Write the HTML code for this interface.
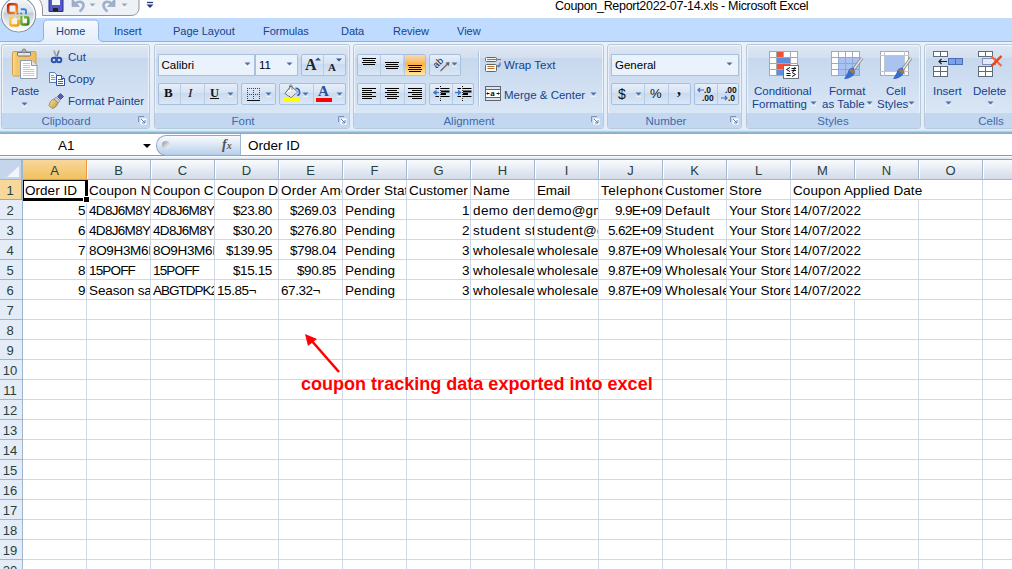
<!DOCTYPE html><html><head><meta charset="utf-8"><style>
*{box-sizing:border-box}
body{margin:0;width:1012px;height:569px;overflow:hidden;position:relative;background:#fff;font-family:"Liberation Sans",sans-serif}
.a{position:absolute}
.tab{position:absolute;top:24px;font-size:11px;color:#15428B;line-height:14px;white-space:nowrap}
.grp{position:absolute;top:44px;height:85px;border:1px solid #B7C8DB;border-radius:3px;
 background:linear-gradient(#E8EEF6 0px,#DDE6F2 2px,#D3DFEF 13px,#C7D8EE 13.5px,#D9E6F5 68px);overflow:hidden;
 box-shadow:inset 0 0 0 1px rgba(255,255,255,.55)}
.glab{position:absolute;left:0;right:0;bottom:0;height:15px;background:#C3D8F0;color:#3E6AAA;font-size:11.5px;text-align:center;line-height:16.5px}
.rt{position:absolute;font-size:11px;color:#15428B;white-space:nowrap;line-height:13px}
.btn{position:absolute;border:1px solid #A7C0DE;border-radius:2px;background:linear-gradient(#E6EEF9,#D7E4F4 42%,#C9DBF0 46%,#DAE7F6)}
.combo{position:absolute;border:1px solid #A9C1DE;background:#EAF2FB;font-size:11.5px;color:#000;line-height:21px;padding-left:5px;white-space:nowrap}
.dd{position:absolute;width:0;height:0;border-left:3px solid transparent;border-right:3px solid transparent;border-top:3px solid #4E72A8}
.cell{position:absolute;height:20px;line-height:22px;font-size:13.5px;color:#000;white-space:nowrap;overflow:hidden;padding:0 1px 0 2px}
.r{text-align:right}
.ch{position:absolute;top:160px;height:19px;font-size:13px;color:#27413E;text-align:center;line-height:21px}
.rh{position:absolute;left:-1px;width:22px;height:19px;font-size:13px;color:#27413E;text-align:center;line-height:21.5px}
</style></head><body><div class="a" style="left:0;top:0;width:1012px;height:18px;background:#fff"></div>
<div class="a" style="left:555px;top:-3.3px;font-size:12.5px;letter-spacing:-0.3px;color:#000;white-space:nowrap;line-height:18px">Coupon_Report2022-07-14.xls - Microsoft Excel</div>
<svg class="a" style="left:30px;top:0" width="115" height="18" viewBox="0 0 115 18"><path d="M9 -1 C11 2, 12.5 5, 12.5 9 V15.5 H101 C106 15.5, 109 12, 109 8 V-1 Z" fill="#EEF2F7" stroke="#8F949B" stroke-width="1"/></svg>
<div class="a" style="left:0;top:18px;width:1012px;height:23px;background:#BFDBFF"></div>
<div class="a" style="left:0;top:41px;width:1012px;height:1px;background:#8DB2E3"></div>
<div class="a" style="left:0;top:42px;width:1012px;height:88px;background:linear-gradient(#EAF1FA,#E3ECF7)"></div>
<div class="a" style="left:0;top:130px;width:1012px;height:1px;background:#C9EEF9"></div>
<div class="a" style="left:0;top:131px;width:1012px;height:1px;background:#B9CCE2"></div><div class="a" style="left:0;top:132px;width:1012px;height:2px;background:linear-gradient(#9DB5D4,#8AA6CB)"></div>
<svg class="a" style="left:38px;top:18px" width="66" height="26" viewBox="0 0 66 26"><defs><linearGradient id="tg" x1="0" y1="0" x2="0" y2="1"><stop offset="0" stop-color="#F7FAFE"/><stop offset="1" stop-color="#E3ECF8"/></linearGradient></defs><path d="M0 23.5 C4 23.5, 5.5 22, 5.5 19 V6 C5.5 3.5, 7 2, 9.5 2 H56.5 C59 2, 60.5 3.5, 60.5 6 V19 C60.5 22, 62 23.5, 66 23.5 V26 H0 Z" fill="url(#tg)" stroke="#8DB2E3" stroke-width="1"/><path d="M0 24.5H66V26H0z" fill="#E9F0FA"/></svg>
<div class="tab" style="left:56px">Home</div>
<div class="tab" style="left:114px">Insert</div>
<div class="tab" style="left:173px">Page Layout</div>
<div class="tab" style="left:263px">Formulas</div>
<div class="tab" style="left:341px">Data</div>
<div class="tab" style="left:393px">Review</div>
<div class="tab" style="left:457px">View</div>
<div class="grp" style="left:1px;width:149px"><div class="glab" style="text-indent:-19px">Clipboard</div></div>
<div class="grp" style="left:154px;width:196px"><div class="glab" style="text-indent:-18px">Font</div></div>
<div class="grp" style="left:353px;width:251px"><div class="glab" style="text-indent:-19px">Alignment</div></div>
<div class="grp" style="left:607px;width:135px"><div class="glab" style="text-indent:-17px">Number</div></div>
<div class="grp" style="left:746px;width:175px"><div class="glab" style="text-indent:-1px">Styles</div></div>
<div class="grp" style="left:924px;width:92px"><div class="glab" style="text-indent:42px">Cells</div></div>
<svg class="a" style="left:11px;top:48px" width="28" height="32" viewBox="0 0 28 32"><defs><linearGradient id="cb" x1="0" y1="0" x2="1" y2="0"><stop offset="0" stop-color="#FBDD98"/><stop offset=".15" stop-color="#F4C76C"/><stop offset="1" stop-color="#EFBE5E"/></linearGradient></defs><rect x="1.5" y="3.5" width="23.5" height="24.5" rx="1.5" fill="url(#cb)" stroke="#CFA04E"/><path d="M6.5 4.5h13v2.5c0 .8-.5 1-1 1h-11c-.5 0-1-.2-1-1z" fill="#E6E9ED" stroke="#6F757D"/><circle cx="13" cy="3" r="2" fill="#DADDE2" stroke="#6F757D" stroke-width=".9"/><circle cx="13" cy="3" r=".8" fill="#7A5A2A"/><path d="M9.5 12.5h11.5l5 5v13h-16.5z" fill="#fff" stroke="#8E9AAB"/><path d="M20.5 12.5v5h5.5" fill="#E2E7EE" stroke="#8E9AAB"/><path d="M12 15.5h7M12 17.5h7M12 19.5h7M12 21.5h11.5M12 23.5h11.5M12 25.5h11.5M12 27.5h11.5" stroke="#C3C9D1"/></svg>
<div class="rt" style="left:11px;top:85px;font-size:11px">Paste</div>
<svg class="a" style="left:21px;top:102px" width="7" height="5" viewBox="0 0 7 5"><path d="M0.5 0.5h6l-3 3z" fill="#4C6FA8"/><path d="M1 4.5h5" stroke="#fff" stroke-opacity=".6"/></svg>
<svg class="a" style="left:49px;top:49px" width="14" height="15" viewBox="0 0 14 15"><path d="M5 1.5l2.5 7M10 1.5l-2.5 7" stroke="#7A8089" stroke-width="1.6"/><path d="M5.2 1.5l2.3 6.5" stroke="#D8DCE2" stroke-width=".6"/><circle cx="5" cy="11" r="2.3" fill="none" stroke="#2A50B0" stroke-width="1.9"/><circle cx="10" cy="11" r="2.3" fill="none" stroke="#2A50B0" stroke-width="1.9"/></svg>
<div class="rt" style="left:68px;top:51px;font-size:11.5px">Cut</div>
<svg class="a" style="left:48px;top:71px" width="18" height="15" viewBox="0 0 18 15"><path d="M1.5 1.5h5l2.5 2.5v7.5h-7.5z" fill="#F4F7FC" stroke="#5A7BB8"/><path d="M3 4.5h3M3 6.5h4.5M3 8.5h4.5" stroke="#7C9BD0"/><path d="M8.5 4.5h5l3 3v7h-8z" fill="#fff" stroke="#2B4FA6"/><path d="M10 8.5h5M10 10.5h5M10 12.5h5" stroke="#3A66C4"/><path d="M13.5 4.5v3h3" fill="#DDE6F3" stroke="#2B4FA6"/></svg>
<div class="rt" style="left:68px;top:73px;font-size:11.5px">Copy</div>
<svg class="a" style="left:48px;top:92px" width="18" height="17" viewBox="0 0 18 17"><defs><linearGradient id="br" x1="0" y1="0" x2="1" y2="1"><stop offset="0" stop-color="#F6E7A4"/><stop offset="1" stop-color="#B8953E"/></linearGradient></defs><path d="M12.5 1.5l3 3-3 3-3-3z" fill="#5E5AB8" stroke="#3C3A8A" stroke-width=".8"/><path d="M8 5l4 4-2 2-4-4z" fill="#C9CCD2" stroke="#7D8088" stroke-width=".7"/><path d="M6 7l4 4c-1 3-3 5-6 5.5L1 13.5C1.5 10.5 3 8 6 7z" fill="url(#br)" stroke="#9C7E36" stroke-width=".8"/></svg>
<div class="rt" style="left:68px;top:95px;font-size:11.5px">Format Painter</div>
<svg class="a" style="left:138px;top:116px" width="9" height="9" viewBox="0 0 9 9"><path d="M0.5 6V0.5H6" fill="none" stroke="#7A94B8"/><rect x="2.5" y="2.5" width="6" height="6" fill="#fff" stroke="none"/><path d="M3 3l4 4M7 4v3H4" stroke="#5F7DA8" fill="none"/></svg>
<svg class="a" style="left:338px;top:116px" width="9" height="9" viewBox="0 0 9 9"><path d="M0.5 6V0.5H6" fill="none" stroke="#7A94B8"/><rect x="2.5" y="2.5" width="6" height="6" fill="#fff" stroke="none"/><path d="M3 3l4 4M7 4v3H4" stroke="#5F7DA8" fill="none"/></svg>
<svg class="a" style="left:591px;top:116px" width="9" height="9" viewBox="0 0 9 9"><path d="M0.5 6V0.5H6" fill="none" stroke="#7A94B8"/><rect x="2.5" y="2.5" width="6" height="6" fill="#fff" stroke="none"/><path d="M3 3l4 4M7 4v3H4" stroke="#5F7DA8" fill="none"/></svg>
<svg class="a" style="left:730px;top:116px" width="9" height="9" viewBox="0 0 9 9"><path d="M0.5 6V0.5H6" fill="none" stroke="#7A94B8"/><rect x="2.5" y="2.5" width="6" height="6" fill="#fff" stroke="none"/><path d="M3 3l4 4M7 4v3H4" stroke="#5F7DA8" fill="none"/></svg>
<div class="combo" style="left:158px;top:54px;width:97px;height:22px;padding-left:2.5px">Calibri</div>
<svg class="a" style="left:244px;top:62px" width="7" height="5" viewBox="0 0 7 5"><path d="M0.5 0.5h6l-3 3z" fill="#4C6FA8"/><path d="M1 4.5h5" stroke="#fff" stroke-opacity=".6"/></svg>
<div class="combo" style="left:255px;top:54px;width:43px;height:22px;padding-left:3px">11</div>
<svg class="a" style="left:286px;top:62px" width="7" height="5" viewBox="0 0 7 5"><path d="M0.5 0.5h6l-3 3z" fill="#4C6FA8"/><path d="M1 4.5h5" stroke="#fff" stroke-opacity=".6"/></svg>
<div class="btn" style="left:301px;top:54px;width:45px;height:22px"></div>
<div class="a" style="left:323px;top:55px;width:1px;height:20px;background:#B7CBE3"></div>
<div class="a" style="left:305px;top:55px;font-family:'Liberation Serif';font-weight:bold;font-size:16px;line-height:20px;color:#222">A</div>
<svg class="a" style="left:315px;top:57px" width="7" height="4" viewBox="0 0 7 4"><path d="M0 3.5h6l-3-3z" fill="#2E5596"/></svg>
<div class="a" style="left:328px;top:60px;font-family:'Liberation Serif';font-weight:bold;font-size:11px;line-height:14px;color:#222">A</div>
<svg class="a" style="left:336px;top:58px" width="7" height="4" viewBox="0 0 7 4"><path d="M0 0.5h6l-3 3z" fill="#2E5596"/></svg>
<div class="btn" style="left:158px;top:83px;width:80px;height:22px"></div>
<div class="a" style="left:180px;top:84px;width:1px;height:20px;background:#B7CBE3"></div>
<div class="a" style="left:204px;top:84px;width:1px;height:20px;background:#B7CBE3"></div>
<div class="a" style="left:164px;top:85px;font-family:'Liberation Serif';font-weight:bold;font-size:13px;line-height:16px;color:#111">B</div>
<div class="a" style="left:188px;top:85px;font-family:'Liberation Serif';font-style:italic;font-size:13.5px;line-height:16px;color:#111">I</div>
<div class="a" style="left:210px;top:85px;font-family:'Liberation Serif';font-weight:bold;font-size:12.5px;line-height:16px;color:#111;text-decoration:underline">U</div>
<svg class="a" style="left:227px;top:92px" width="7" height="5" viewBox="0 0 7 5"><path d="M0.5 0.5h6l-3 3z" fill="#4C6FA8"/><path d="M1 4.5h5" stroke="#fff" stroke-opacity=".6"/></svg>
<div class="btn" style="left:241px;top:83px;width:35px;height:22px"></div>
<svg class="a" style="left:246px;top:87px" width="15" height="15" viewBox="0 0 15 15"><path d="M1 1.5h13M1 7.5h13M1.5 1v12M7.5 1v12M13.5 1v12" stroke="#444" stroke-dasharray="1 1" fill="none"/><path d="M1 13.5h13" stroke="#111"/></svg>
<svg class="a" style="left:265px;top:92px" width="7" height="5" viewBox="0 0 7 5"><path d="M0.5 0.5h6l-3 3z" fill="#4C6FA8"/><path d="M1 4.5h5" stroke="#fff" stroke-opacity=".6"/></svg>
<div class="btn" style="left:279px;top:83px;width:67px;height:22px"></div>
<div class="a" style="left:313px;top:84px;width:1px;height:20px;background:#B7CBE3"></div>
<svg class="a" style="left:283px;top:84px" width="18" height="14" viewBox="0 0 18 14"><path d="M8 2L2 9.5L8 13.5L14.5 8z" fill="#fff" stroke="#5A5F66" stroke-width="1"/><path d="M2.5 9.5L8 13L14 8.2L10 6z" fill="#E2E6EC"/><path d="M6.5 5.5V1.8C6.5 .5 9 .5 9 1.8V6" fill="none" stroke="#7D828A" stroke-width="1"/><path d="M12.5 4.5C15.5 4 17 6.5 16.5 9.5C16.3 11 15 11.5 14.5 10.5" fill="none" stroke="#2F62C8" stroke-width="1.8"/></svg>
<div class="a" style="left:283px;top:98px;width:16px;height:4px;background:#FFFF00"></div>
<svg class="a" style="left:302px;top:92px" width="7" height="5" viewBox="0 0 7 5"><path d="M0.5 0.5h6l-3 3z" fill="#4C6FA8"/><path d="M1 4.5h5" stroke="#fff" stroke-opacity=".6"/></svg>
<div class="a" style="left:318px;top:84px;font-family:'Liberation Serif';font-weight:bold;font-size:15px;line-height:15px;color:#2B4F9E">A</div>
<div class="a" style="left:316px;top:98px;width:16px;height:4px;background:#FF0000"></div>
<svg class="a" style="left:336px;top:92px" width="7" height="5" viewBox="0 0 7 5"><path d="M0.5 0.5h6l-3 3z" fill="#4C6FA8"/><path d="M1 4.5h5" stroke="#fff" stroke-opacity=".6"/></svg>
<div class="btn" style="left:357px;top:54px;width:69px;height:22px;overflow:hidden"><div class="a" style="left:45px;top:0;width:23px;height:20px;background:linear-gradient(#F7D9B2,#FDBB68 35%,#FFAE45 45%,#FFD27C 80%,#FFE9A3)"></div></div>
<div class="a" style="left:380px;top:55px;width:1px;height:20px;background:#B7CBE3"></div>
<div class="a" style="left:404px;top:55px;width:1px;height:20px;background:#B7CBE3"></div>
<svg class="a" style="left:361px;top:57px" width="16" height="9" viewBox="0 0 16 9"><path d="M1 1.5h14M2 3.5h12M1 5.5h14M2 7.5h12" stroke="#000" stroke-width="1.1"/></svg>
<svg class="a" style="left:384px;top:61px" width="16" height="9" viewBox="0 0 16 9"><path d="M1 1.5h14M2 3.5h12M1 5.5h14M2 7.5h12" stroke="#000" stroke-width="1.1"/></svg>
<svg class="a" style="left:407px;top:64px" width="16" height="9" viewBox="0 0 16 9"><path d="M1 1.5h14M2 3.5h12M1 5.5h14M2 7.5h12" stroke="#000" stroke-width="1.1"/></svg>
<div class="btn" style="left:429px;top:54px;width:32px;height:22px"></div>
<svg class="a" style="left:433px;top:56px" width="18" height="17" viewBox="0 0 18 17"><text x="0" y="10" font-family="Liberation Sans" font-size="9.5" transform="rotate(-45 5 7)" fill="#222">ab</text><path d="M7.5 15l8-8" stroke="#6E5A4E" stroke-width="1.1"/><path d="M16.5 6l-4 .8 3.2 3.2z" fill="#6E5A4E"/></svg>
<svg class="a" style="left:451px;top:62px" width="7" height="5" viewBox="0 0 7 5"><path d="M0.5 0.5h6l-3 3z" fill="#4C6FA8"/><path d="M1 4.5h5" stroke="#fff" stroke-opacity=".6"/></svg>
<div class="btn" style="left:357px;top:83px;width:69px;height:22px"></div>
<div class="a" style="left:380px;top:84px;width:1px;height:20px;background:#B7CBE3"></div>
<div class="a" style="left:404px;top:84px;width:1px;height:20px;background:#B7CBE3"></div>
<svg class="a" style="left:361px;top:87px" width="16" height="14" viewBox="0 0 16 14"><path d="M1 1.5h14M1 3.5h10M1 5.5h14M1 7.5h10M1 9.5h14M1 11.5h10" stroke="#000" stroke-width="1.1"/></svg>
<svg class="a" style="left:384px;top:87px" width="16" height="14" viewBox="0 0 16 14"><path d="M1 1.5h14M3 3.5h10M1 5.5h14M3 7.5h10M1 9.5h14M3 11.5h10" stroke="#000" stroke-width="1.1"/></svg>
<svg class="a" style="left:407px;top:87px" width="16" height="14" viewBox="0 0 16 14"><path d="M1 1.5h14M5 3.5h10M1 5.5h14M5 7.5h10M1 9.5h14M5 11.5h10" stroke="#000" stroke-width="1.1"/></svg>
<div class="btn" style="left:429px;top:83px;width:45px;height:22px"></div>
<div class="a" style="left:452px;top:84px;width:1px;height:20px;background:#B7CBE3"></div>
<svg class="a" style="left:433px;top:86px" width="17" height="16" viewBox="0 0 17 16"><path d="M7.5 0v1M7.5 14v1" stroke="#000"/><path d="M7.5 2v11" stroke="#000" stroke-dasharray="1 1" stroke-opacity=".7"/><path d="M2.5 2.5h3.5M8 2.5h8.5M2.5 10.5h3.5M8 10.5h8.5" stroke="#000"/><path d="M8 5.5h8.5M8 8h5" stroke="#000" stroke-width="1.8"/><path d="M0.5 6.5h5.5" stroke="#3B73D6" stroke-width="1.3"/><path d="M0 6.5l3.5-3v6z" fill="#3B73D6"/></svg>
<svg class="a" style="left:455px;top:86px" width="17" height="16" viewBox="0 0 17 16"><path d="M7.5 0v1M7.5 14v1" stroke="#000"/><path d="M7.5 2v11" stroke="#000" stroke-dasharray="1 1" stroke-opacity=".7"/><path d="M2.5 2.5h3.5M8 2.5h8.5M2.5 10.5h3.5M8 10.5h8.5" stroke="#000"/><path d="M8 5.5h8.5M8 8h5" stroke="#000" stroke-width="1.8"/><path d="M0 6.5h5" stroke="#3B73D6" stroke-width="1.3"/><path d="M6.5 6.5l-3.5-3v6z" fill="#3B73D6"/></svg>
<div class="a" style="left:478px;top:51px;width:1px;height:55px;background:#AFC5E0"></div>
<div class="a" style="left:479px;top:51px;width:1px;height:55px;background:#F0F6FC"></div>
<svg class="a" style="left:484px;top:56px" width="18" height="17" viewBox="0 0 18 17"><rect x="1.5" y="1.5" width="11" height="4" rx="1" fill="#fff" stroke="#5F6670"/><rect x="1.5" y="8.5" width="11" height="7" rx="1" fill="#fff" stroke="#5F6670"/><path d="M3 3.5h14" stroke="#B8732A" stroke-width="1.2"/><path d="M3.5 10.5h7M3.5 12.5h7" stroke="#B8732A" stroke-width="1.2"/><path d="M16 6.5v3.5h-2.5M13.5 10l1.5-1.5M13.5 10l1.5 1.5" stroke="#3A62B8" stroke-width="1" fill="none"/></svg>
<div class="rt" style="left:504px;top:59px;font-size:11.5px">Wrap Text</div>
<svg class="a" style="left:484px;top:86px" width="18" height="16" viewBox="0 0 18 16"><rect x="1.5" y="0.5" width="15" height="14" fill="#fff" stroke="#5F6670"/><path d="M1 3.5h16M1 11.5h16M9 0v3.5M9 11.5v3" stroke="#5F6670"/><rect x="2" y="1" width="14" height="2" fill="#DCE6F2"/><rect x="2" y="12" width="14" height="2" fill="#DCE6F2"/><text x="6.2" y="10.3" font-family="Liberation Serif" font-weight="bold" font-size="9" fill="#111">a</text><path d="M2.5 7.5h3M12.5 7.5h3" stroke="#111"/><path d="M2.5 7.5l1.5-1.5v3z" fill="#111"/><path d="M15.5 7.5l-1.5-1.5v3z" fill="#111"/></svg>
<div class="rt" style="left:504px;top:89px;font-size:11.5px">Merge &amp; Center</div>
<svg class="a" style="left:590px;top:92px" width="7" height="5" viewBox="0 0 7 5"><path d="M0.5 0.5h6l-3 3z" fill="#4C6FA8"/><path d="M1 4.5h5" stroke="#fff" stroke-opacity=".6"/></svg>
<div class="combo" style="left:611px;top:54px;width:128px;height:22px;padding-left:3px">General</div>
<svg class="a" style="left:726px;top:62px" width="7" height="5" viewBox="0 0 7 5"><path d="M0.5 0.5h6l-3 3z" fill="#4C6FA8"/><path d="M1 4.5h5" stroke="#fff" stroke-opacity=".6"/></svg>
<div class="btn" style="left:611px;top:83px;width:80px;height:22px"></div>
<div class="a" style="left:644px;top:84px;width:1px;height:20px;background:#B7CBE3"></div>
<div class="a" style="left:668px;top:84px;width:1px;height:20px;background:#B7CBE3"></div>
<div class="a" style="left:618px;top:85px;font-size:14px;line-height:18px;color:#111">$</div>
<svg class="a" style="left:635px;top:92px" width="7" height="5" viewBox="0 0 7 5"><path d="M0.5 0.5h6l-3 3z" fill="#4C6FA8"/><path d="M1 4.5h5" stroke="#fff" stroke-opacity=".6"/></svg>
<div class="a" style="left:650px;top:86px;font-size:13px;line-height:16px;color:#111">%</div>
<div class="a" style="left:677px;top:82px;font-family:'Liberation Serif';font-weight:bold;font-size:16px;line-height:16px;color:#111">,</div>
<div class="btn" style="left:694px;top:83px;width:45px;height:22px"></div>
<div class="a" style="left:717px;top:84px;width:1px;height:20px;background:#B7CBE3"></div>
<svg class="a" style="left:697px;top:86px" width="18" height="16" viewBox="0 0 18 16"><text x="7" y="7" font-family="Liberation Sans" font-size="8.5" font-weight="bold" fill="#111">.0</text><text x="5" y="14.5" font-family="Liberation Sans" font-size="8.5" font-weight="bold" fill="#111">.00</text><path d="M1 4h6M3 2l-2 2 2 2" stroke="#3D6CC0" stroke-width="1.2" fill="none"/></svg>
<svg class="a" style="left:720px;top:86px" width="18" height="16" viewBox="0 0 18 16"><text x="5" y="7" font-family="Liberation Sans" font-size="8.5" font-weight="bold" fill="#111">.00</text><text x="8" y="14.5" font-family="Liberation Sans" font-size="8.5" font-weight="bold" fill="#111">.0</text><path d="M1 12h6M5 10l2 2-2 2" stroke="#3D6CC0" stroke-width="1.2" fill="none"/></svg>
<svg class="a" style="left:768px;top:50px" width="32" height="30" viewBox="0 0 32 30"><g stroke="#A3A9B2" fill="#fff"><rect x="1.5" y="1.5" width="7" height="6"/><rect x="8.5" y="1.5" width="7" height="6" fill="#F0513A"/><rect x="15.5" y="1.5" width="7" height="6"/><rect x="22.5" y="1.5" width="7" height="6"/><rect x="1.5" y="7.5" width="7" height="6"/><rect x="8.5" y="7.5" width="14" height="6" fill="#5C8EE0"/><rect x="22.5" y="7.5" width="7" height="6"/><rect x="1.5" y="13.5" width="7" height="6"/><rect x="8.5" y="13.5" width="14" height="6" fill="#F0513A"/><rect x="22.5" y="13.5" width="7" height="6"/><rect x="1.5" y="19.5" width="7" height="6"/><rect x="8.5" y="19.5" width="7" height="6" fill="#5C8EE0"/></g><rect x="15.5" y="15.5" width="15" height="13" fill="#fff" stroke="#6F757D"/><path d="M22 17.5l-3.5 2 3.5 2M23.5 18.5h4.5M23.5 20.5h4.5M27 17l-2 5M18.5 23.5h4M18.5 25.5h4M24 22.5l3.5 2-3.5 2" stroke="#111" stroke-width="1" fill="none"/></svg>
<div class="rt" style="left:754px;top:85px;font-size:11.5px">Conditional</div>
<div class="rt" style="left:752px;top:98px;font-size:11.5px">Formatting</div>
<svg class="a" style="left:810px;top:101px" width="7" height="5" viewBox="0 0 7 5"><path d="M0.5 0.5h6l-3 3z" fill="#4C6FA8"/><path d="M1 4.5h5" stroke="#fff" stroke-opacity=".6"/></svg>
<svg class="a" style="left:830px;top:50px" width="34" height="30" viewBox="0 0 34 30"><g stroke="#A3A9B2" fill="#fff"><rect x="1.5" y="1.5" width="7" height="6"/><rect x="8.5" y="1.5" width="7" height="6"/><rect x="15.5" y="1.5" width="7" height="6"/><rect x="22.5" y="1.5" width="7" height="6"/><rect x="1.5" y="7.5" width="7" height="6"/><rect x="1.5" y="13.5" width="7" height="6"/><rect x="1.5" y="19.5" width="7" height="6"/></g><g stroke="#8FA8D6" fill="#A9C2F0"><rect x="8.5" y="7.5" width="7" height="6"/><rect x="15.5" y="7.5" width="7" height="6"/><rect x="22.5" y="7.5" width="7" height="6"/><rect x="8.5" y="13.5" width="7" height="6"/><rect x="15.5" y="13.5" width="7" height="6"/><rect x="22.5" y="13.5" width="7" height="6"/><rect x="8.5" y="19.5" width="7" height="6"/><rect x="15.5" y="19.5" width="7" height="6"/><rect x="22.5" y="19.5" width="7" height="6"/></g><path d="M32 8l-8 11" stroke="#8C8C8C" stroke-width="3"/><path d="M32 8l-8 11" stroke="#E8E8E8" stroke-width="1.3"/><path d="M24 18c-3-1-6 2-6 4l-4 7c4 0 9-2 11-6z" fill="#3B6BC8"/><path d="M21 19c2 0 4 2 4 3l-2 2c-1-2-3-3-4-3z" fill="#A67C3D"/></svg>
<div class="rt" style="left:829px;top:85px;font-size:11.5px">Format</div>
<div class="rt" style="left:822px;top:98px;font-size:11.5px">as Table</div>
<svg class="a" style="left:866px;top:101px" width="7" height="5" viewBox="0 0 7 5"><path d="M0.5 0.5h6l-3 3z" fill="#4C6FA8"/><path d="M1 4.5h5" stroke="#fff" stroke-opacity=".6"/></svg>
<svg class="a" style="left:879px;top:50px" width="34" height="30" viewBox="0 0 34 30"><rect x="1.5" y="1.5" width="28" height="24" fill="#fff" stroke="#A3A9B2"/><rect x="5.5" y="5.5" width="20" height="16" fill="#A9C2F0" stroke="#8FA8D6"/><path d="M1 5.5h29M1 21.5h29M5.5 1v25M25.5 1v25" stroke="#C0C6CE"/><path d="M32 8l-8 11" stroke="#8C8C8C" stroke-width="3"/><path d="M32 8l-8 11" stroke="#E8E8E8" stroke-width="1.3"/><path d="M24 18c-3-1-6 2-6 4l-4 7c4 0 9-2 11-6z" fill="#3B6BC8"/><path d="M21 19c2 0 4 2 4 3l-2 2c-1-2-3-3-4-3z" fill="#A67C3D"/></svg>
<div class="rt" style="left:886px;top:85px;font-size:11.5px">Cell</div>
<div class="rt" style="left:877px;top:98px;font-size:11.5px">Styles</div>
<svg class="a" style="left:908px;top:101px" width="7" height="5" viewBox="0 0 7 5"><path d="M0.5 0.5h6l-3 3z" fill="#4C6FA8"/><path d="M1 4.5h5" stroke="#fff" stroke-opacity=".6"/></svg>
<svg class="a" style="left:932px;top:50px" width="32" height="28" viewBox="0 0 32 28"><g fill="#fff" stroke="#5E6B7A"><rect x="1.5" y="1.5" width="7" height="5"/><rect x="8.5" y="1.5" width="7" height="5"/><rect x="1.5" y="16.5" width="7" height="5"/><rect x="8.5" y="16.5" width="7" height="5"/><rect x="1.5" y="21.5" width="7" height="5"/><rect x="8.5" y="21.5" width="7" height="5"/></g><g fill="#7CA3EA" stroke="#4C6FB2"><rect x="16.5" y="8.5" width="7" height="6"/><rect x="23.5" y="8.5" width="7" height="6"/></g><path d="M7 11.5h8M9.5 9l-2.5 2.5 2.5 2.5" stroke="#222" stroke-width="1.2" fill="none"/></svg>
<div class="rt" style="left:933px;top:85px;font-size:11.5px">Insert</div>
<svg class="a" style="left:945px;top:101px" width="7" height="5" viewBox="0 0 7 5"><path d="M0.5 0.5h6l-3 3z" fill="#4C6FA8"/><path d="M1 4.5h5" stroke="#fff" stroke-opacity=".6"/></svg>
<svg class="a" style="left:977px;top:50px" width="28" height="28" viewBox="0 0 28 28"><g fill="#fff" stroke="#5E6B7A"><rect x="1.5" y="1.5" width="7" height="5"/><rect x="8.5" y="1.5" width="7" height="5"/><rect x="1.5" y="16.5" width="7" height="5"/><rect x="8.5" y="16.5" width="7" height="5"/><rect x="1.5" y="21.5" width="7" height="5"/><rect x="8.5" y="21.5" width="7" height="5"/></g><rect x="5.5" y="8.5" width="13" height="6" fill="#E4EAF2" stroke="#2C3F8C" stroke-dasharray="1 1"/><path d="M14.5 6.5l10 9.5" stroke="#F2683E" stroke-width="2.2"/><path d="M24.5 6l-10 10" stroke="#E8431C" stroke-width="2.4"/></svg>
<div class="rt" style="left:973px;top:85px;font-size:11.5px">Delete</div>
<svg class="a" style="left:987px;top:101px" width="7" height="5" viewBox="0 0 7 5"><path d="M0.5 0.5h6l-3 3z" fill="#4C6FA8"/><path d="M1 4.5h5" stroke="#fff" stroke-opacity=".6"/></svg>
<svg class="a" style="left:48px;top:0px" width="16" height="13" viewBox="0 0 16 13"><path d="M1 0v11.5h14V0" fill="#5458C8" stroke="#2B2F8F"/><rect x="4" y="0" width="8" height="5" fill="#F4F6FA"/><rect x="5" y="8" width="5" height="3.5" fill="#222"/></svg>
<svg class="a" style="left:68px;top:0px" width="20" height="13" viewBox="0 0 20 13"><path d="M4 -1V6.5H11.5z" fill="#9DB0CC" stroke="#8CA1C2" stroke-width=".6"/><path d="M7 3.5C11 0.5 15.5 1.5 15.5 5.5C15.5 8 13.5 10 11.5 11.5" fill="none" stroke="#9DB0CC" stroke-width="2.6"/></svg>
<svg class="a" style="left:89px;top:3px" width="7" height="5" viewBox="0 0 7 5"><path d="M0.5 0.5h6l-3 3z" fill="#9DA6B3"/><path d="M1 4.5h5" stroke="#fff" stroke-opacity=".6"/></svg>
<svg class="a" style="left:100px;top:0px" width="20" height="13" viewBox="0 0 20 13"><path d="M15 -1V6.5H7.5z" fill="#9DB0CC" stroke="#8CA1C2" stroke-width=".6"/><path d="M12 3.5C8 0.5 3.5 1.5 3.5 5.5C3.5 8 5.5 10 7.5 11.5" fill="none" stroke="#9DB0CC" stroke-width="2.6"/></svg>
<svg class="a" style="left:121px;top:3px" width="7" height="5" viewBox="0 0 7 5"><path d="M0.5 0.5h6l-3 3z" fill="#9DA6B3"/><path d="M1 4.5h5" stroke="#fff" stroke-opacity=".6"/></svg>
<svg class="a" style="left:146px;top:1px" width="8" height="8" viewBox="0 0 8 8"><path d="M1 1.5h6" stroke="#1F3A8A" stroke-width="1.3"/><path d="M0.5 3.5h7l-3.5 3.5z" fill="#1F3A8A"/></svg>
<svg class="a" style="left:0px;top:0px" width="38" height="35" viewBox="0 0 38 35"><defs><linearGradient id="ob" x1="0" y1="0" x2="0" y2="1"><stop offset="0" stop-color="#F4F6F9"/><stop offset=".42" stop-color="#DCE2E9"/><stop offset=".45" stop-color="#C2CBD6"/><stop offset=".7" stop-color="#E3E8EE"/><stop offset="1" stop-color="#FFFFFF"/></linearGradient><linearGradient id="o1" x1="0" y1="0" x2="1" y2="1"><stop offset="0" stop-color="#C21F08"/><stop offset="1" stop-color="#F7961C"/></linearGradient><linearGradient id="o2" x1="0" y1="0" x2="1" y2="1"><stop offset="0" stop-color="#FFD23E"/><stop offset="1" stop-color="#F39A10"/></linearGradient><linearGradient id="o3" x1="0" y1="0" x2="1" y2="1"><stop offset="0" stop-color="#8CC63F"/><stop offset="1" stop-color="#357F1E"/></linearGradient></defs><circle cx="18.5" cy="14.8" r="17.2" fill="url(#ob)" stroke="#8A95A3" stroke-width="1.1"/><circle cx="18.5" cy="14.8" r="15.9" fill="none" stroke="#fff" stroke-opacity=".85" stroke-width="1.2"/><path d="M16.8 12.8V6.2Q16.8 4.2 14.8 4.2H10.2Q8.2 4.2 8.2 6.2V11Q8.2 13 10.2 13H15" fill="#EEF1F4" stroke="url(#o1)" stroke-width="2.6"/><path d="M20.8 9.3H24.3Q26 9.3 26 11V14.2" fill="none" stroke="#2B8BE0" stroke-width="1.9"/><path d="M13.5 17.5H11.8Q10.3 17.5 10.3 19V23.8Q10.3 25.5 12 25.5H16.8Q18.5 25.5 18.5 23.8V19.5" fill="#F1F2F2" stroke="url(#o2)" stroke-width="2.6"/><path d="M21.3 17.2V22.8Q21.3 24.5 23 24.5H26.8Q28.3 24.5 28.3 23V18.8Q28.3 17.2 26.8 17.2H24" fill="#F3F5F2" stroke="url(#o3)" stroke-width="2.5"/><circle cx="17.6" cy="13.6" r="1.1" fill="#F06A10"/><circle cx="21.2" cy="13.5" r="1.1" fill="#2B8BE0"/><circle cx="17.6" cy="17.2" r="1.1" fill="#FBBF2A"/><circle cx="21.3" cy="17.1" r="1.1" fill="#5AA832"/></svg>
<div class="a" style="left:0;top:134px;width:1012px;height:21px;background:#fff"></div>
<div class="a" style="left:0;top:155px;width:1012px;height:1px;background:#7F9DC0"></div>
<div class="a" style="left:0;top:156px;width:1012px;height:3px;background:linear-gradient(#fff,#D5E2F1)"></div>
<div class="a" style="left:0;top:159px;width:1012px;height:1px;background:#8BA4C5"></div>
<div class="a" style="left:58px;top:138px;font-size:13.5px;line-height:16px">A1</div>
<div class="a" style="left:143px;top:144px;width:0;height:0;border-left:4px solid transparent;border-right:4px solid transparent;border-top:4px solid #000"></div>
<div class="a" style="left:156px;top:135px;width:85px;height:21px;border:1px solid #8FA9CC;border-right:none;border-radius:10px 0 0 10px;background:linear-gradient(#F8FBFE,#DDE8F5 45%,#B7CEEB)"></div>
<div class="a" style="left:240px;top:134px;width:1px;height:21px;background:#9FB6D2"></div>
<div class="a" style="left:162px;top:141px;width:8px;height:8px;border-radius:50%;background:linear-gradient(135deg,#8E939A,#D8DCE0 60%,#F4F5F6)"></div>
<div class="a" style="left:222px;top:136px;font-family:'Liberation Serif';font-style:italic;font-weight:bold;font-size:14px;color:#4F545B;line-height:18px">f<span style="font-size:10px">x</span></div>
<div class="a" style="left:248px;top:138px;font-size:13.5px;line-height:16px">Order ID</div>
<div class="a" style="left:86px;top:180px;width:1px;height:389px;background:#D0D7E5"></div>
<div class="a" style="left:150px;top:180px;width:1px;height:389px;background:#D0D7E5"></div>
<div class="a" style="left:214px;top:180px;width:1px;height:389px;background:#D0D7E5"></div>
<div class="a" style="left:278px;top:180px;width:1px;height:389px;background:#D0D7E5"></div>
<div class="a" style="left:342px;top:180px;width:1px;height:389px;background:#D0D7E5"></div>
<div class="a" style="left:406px;top:180px;width:1px;height:389px;background:#D0D7E5"></div>
<div class="a" style="left:470px;top:180px;width:1px;height:389px;background:#D0D7E5"></div>
<div class="a" style="left:534px;top:180px;width:1px;height:389px;background:#D0D7E5"></div>
<div class="a" style="left:598px;top:180px;width:1px;height:389px;background:#D0D7E5"></div>
<div class="a" style="left:662px;top:180px;width:1px;height:389px;background:#D0D7E5"></div>
<div class="a" style="left:726px;top:180px;width:1px;height:389px;background:#D0D7E5"></div>
<div class="a" style="left:790px;top:180px;width:1px;height:389px;background:#D0D7E5"></div>
<div class="a" style="left:854px;top:300px;width:1px;height:269px;background:#D0D7E5"></div>
<div class="a" style="left:918px;top:200px;width:1px;height:369px;background:#D0D7E5"></div>
<div class="a" style="left:982px;top:180px;width:1px;height:389px;background:#D0D7E5"></div>
<div class="a" style="left:1046px;top:180px;width:1px;height:389px;background:#D0D7E5"></div>
<div class="a" style="left:22px;top:199px;width:990px;height:1px;background:#D0D7E5"></div>
<div class="a" style="left:22px;top:219px;width:990px;height:1px;background:#D0D7E5"></div>
<div class="a" style="left:22px;top:239px;width:990px;height:1px;background:#D0D7E5"></div>
<div class="a" style="left:22px;top:259px;width:990px;height:1px;background:#D0D7E5"></div>
<div class="a" style="left:22px;top:279px;width:990px;height:1px;background:#D0D7E5"></div>
<div class="a" style="left:22px;top:299px;width:990px;height:1px;background:#D0D7E5"></div>
<div class="a" style="left:22px;top:319px;width:990px;height:1px;background:#D0D7E5"></div>
<div class="a" style="left:22px;top:339px;width:990px;height:1px;background:#D0D7E5"></div>
<div class="a" style="left:22px;top:359px;width:990px;height:1px;background:#D0D7E5"></div>
<div class="a" style="left:22px;top:379px;width:990px;height:1px;background:#D0D7E5"></div>
<div class="a" style="left:22px;top:399px;width:990px;height:1px;background:#D0D7E5"></div>
<div class="a" style="left:22px;top:419px;width:990px;height:1px;background:#D0D7E5"></div>
<div class="a" style="left:22px;top:439px;width:990px;height:1px;background:#D0D7E5"></div>
<div class="a" style="left:22px;top:459px;width:990px;height:1px;background:#D0D7E5"></div>
<div class="a" style="left:22px;top:479px;width:990px;height:1px;background:#D0D7E5"></div>
<div class="a" style="left:22px;top:499px;width:990px;height:1px;background:#D0D7E5"></div>
<div class="a" style="left:22px;top:519px;width:990px;height:1px;background:#D0D7E5"></div>
<div class="a" style="left:22px;top:539px;width:990px;height:1px;background:#D0D7E5"></div>
<div class="a" style="left:22px;top:559px;width:990px;height:1px;background:#D0D7E5"></div>
<div class="a" style="left:22px;top:579px;width:990px;height:1px;background:#D0D7E5"></div>
<div class="a" style="left:0;top:160px;width:1012px;height:20px;background:linear-gradient(#F9FCFD,#D3DBE9);border-bottom:1px solid #9EB6CE"></div>
<div class="a" style="left:23px;top:160px;width:64px;height:20px;background:linear-gradient(#F8D79B,#F1C15F);border-right:1px solid #F29536;border-bottom:1px solid #F29536"></div>
<div class="ch" style="left:23px;width:63px">A</div>
<div class="a" style="left:150px;top:160px;width:1px;height:19px;background:#9EB6CE"></div>
<div class="a" style="left:87px;top:160px;width:1px;height:19px;background:#fff"></div>
<div class="ch" style="left:87px;width:63px">B</div>
<div class="a" style="left:214px;top:160px;width:1px;height:19px;background:#9EB6CE"></div>
<div class="a" style="left:151px;top:160px;width:1px;height:19px;background:#fff"></div>
<div class="ch" style="left:151px;width:63px">C</div>
<div class="a" style="left:278px;top:160px;width:1px;height:19px;background:#9EB6CE"></div>
<div class="a" style="left:215px;top:160px;width:1px;height:19px;background:#fff"></div>
<div class="ch" style="left:215px;width:63px">D</div>
<div class="a" style="left:342px;top:160px;width:1px;height:19px;background:#9EB6CE"></div>
<div class="a" style="left:279px;top:160px;width:1px;height:19px;background:#fff"></div>
<div class="ch" style="left:279px;width:63px">E</div>
<div class="a" style="left:406px;top:160px;width:1px;height:19px;background:#9EB6CE"></div>
<div class="a" style="left:343px;top:160px;width:1px;height:19px;background:#fff"></div>
<div class="ch" style="left:343px;width:63px">F</div>
<div class="a" style="left:470px;top:160px;width:1px;height:19px;background:#9EB6CE"></div>
<div class="a" style="left:407px;top:160px;width:1px;height:19px;background:#fff"></div>
<div class="ch" style="left:407px;width:63px">G</div>
<div class="a" style="left:534px;top:160px;width:1px;height:19px;background:#9EB6CE"></div>
<div class="a" style="left:471px;top:160px;width:1px;height:19px;background:#fff"></div>
<div class="ch" style="left:471px;width:63px">H</div>
<div class="a" style="left:598px;top:160px;width:1px;height:19px;background:#9EB6CE"></div>
<div class="a" style="left:535px;top:160px;width:1px;height:19px;background:#fff"></div>
<div class="ch" style="left:535px;width:63px">I</div>
<div class="a" style="left:662px;top:160px;width:1px;height:19px;background:#9EB6CE"></div>
<div class="a" style="left:599px;top:160px;width:1px;height:19px;background:#fff"></div>
<div class="ch" style="left:599px;width:63px">J</div>
<div class="a" style="left:726px;top:160px;width:1px;height:19px;background:#9EB6CE"></div>
<div class="a" style="left:663px;top:160px;width:1px;height:19px;background:#fff"></div>
<div class="ch" style="left:663px;width:63px">K</div>
<div class="a" style="left:790px;top:160px;width:1px;height:19px;background:#9EB6CE"></div>
<div class="a" style="left:727px;top:160px;width:1px;height:19px;background:#fff"></div>
<div class="ch" style="left:727px;width:63px">L</div>
<div class="a" style="left:854px;top:160px;width:1px;height:19px;background:#9EB6CE"></div>
<div class="a" style="left:791px;top:160px;width:1px;height:19px;background:#fff"></div>
<div class="ch" style="left:791px;width:63px">M</div>
<div class="a" style="left:918px;top:160px;width:1px;height:19px;background:#9EB6CE"></div>
<div class="a" style="left:855px;top:160px;width:1px;height:19px;background:#fff"></div>
<div class="ch" style="left:855px;width:63px">N</div>
<div class="a" style="left:982px;top:160px;width:1px;height:19px;background:#9EB6CE"></div>
<div class="a" style="left:919px;top:160px;width:1px;height:19px;background:#fff"></div>
<div class="ch" style="left:919px;width:63px">O</div>
<div class="a" style="left:1046px;top:160px;width:1px;height:19px;background:#9EB6CE"></div>
<div class="a" style="left:983px;top:160px;width:1px;height:19px;background:#fff"></div>
<div class="a" style="left:0;top:180px;width:22px;height:389px;background:#E4ECF7"></div>
<div class="a" style="left:22px;top:160px;width:1px;height:409px;background:#9EB6CE"></div>
<div class="a" style="left:0;top:180px;width:22px;height:20px;background:#F8D79B;border-bottom:1px solid #F29536;border-right:1px solid #F29536"></div>

<div class="rh" style="top:180px">1</div>
<div class="a" style="left:0;top:219px;width:22px;height:1px;background:#9EB6CE"></div>
<div class="rh" style="top:200px">2</div>
<div class="a" style="left:0;top:239px;width:22px;height:1px;background:#9EB6CE"></div>
<div class="rh" style="top:220px">3</div>
<div class="a" style="left:0;top:259px;width:22px;height:1px;background:#9EB6CE"></div>
<div class="rh" style="top:240px">4</div>
<div class="a" style="left:0;top:279px;width:22px;height:1px;background:#9EB6CE"></div>
<div class="rh" style="top:260px">5</div>
<div class="a" style="left:0;top:299px;width:22px;height:1px;background:#9EB6CE"></div>
<div class="rh" style="top:280px">6</div>
<div class="a" style="left:0;top:319px;width:22px;height:1px;background:#9EB6CE"></div>
<div class="rh" style="top:300px">7</div>
<div class="a" style="left:0;top:339px;width:22px;height:1px;background:#9EB6CE"></div>
<div class="rh" style="top:320px">8</div>
<div class="a" style="left:0;top:359px;width:22px;height:1px;background:#9EB6CE"></div>
<div class="rh" style="top:340px">9</div>
<div class="a" style="left:0;top:379px;width:22px;height:1px;background:#9EB6CE"></div>
<div class="rh" style="top:360px">10</div>
<div class="a" style="left:0;top:399px;width:22px;height:1px;background:#9EB6CE"></div>
<div class="rh" style="top:380px">11</div>
<div class="a" style="left:0;top:419px;width:22px;height:1px;background:#9EB6CE"></div>
<div class="rh" style="top:400px">12</div>
<div class="a" style="left:0;top:439px;width:22px;height:1px;background:#9EB6CE"></div>
<div class="rh" style="top:420px">13</div>
<div class="a" style="left:0;top:459px;width:22px;height:1px;background:#9EB6CE"></div>
<div class="rh" style="top:440px">14</div>
<div class="a" style="left:0;top:479px;width:22px;height:1px;background:#9EB6CE"></div>
<div class="rh" style="top:460px">15</div>
<div class="a" style="left:0;top:499px;width:22px;height:1px;background:#9EB6CE"></div>
<div class="rh" style="top:480px">16</div>
<div class="a" style="left:0;top:519px;width:22px;height:1px;background:#9EB6CE"></div>
<div class="rh" style="top:500px">17</div>
<div class="a" style="left:0;top:539px;width:22px;height:1px;background:#9EB6CE"></div>
<div class="rh" style="top:520px">18</div>
<div class="a" style="left:0;top:559px;width:22px;height:1px;background:#9EB6CE"></div>
<div class="rh" style="top:540px">19</div>
<div class="a" style="left:0;top:579px;width:22px;height:1px;background:#9EB6CE"></div>
<div class="rh" style="top:560px">20</div>
<div class="a" style="left:0;top:160px;width:22px;height:20px;background:#C5D6EC;border-right:1px solid #9EB6CE;border-bottom:1px solid #9EB6CE"></div>
<div class="a" style="left:7px;top:166px;width:0;height:0;border-left:12px solid transparent;border-bottom:11px solid #F2F5F9"></div>
<div class="cell" style="left:23px;top:180px;width:63px;letter-spacing:0.03px">Order ID</div>
<div class="cell" style="left:87px;top:180px;width:63px;letter-spacing:0.09px">Coupon Name</div>
<div class="cell" style="left:151px;top:180px;width:63px;letter-spacing:-0.03px">Coupon Code</div>
<div class="cell" style="left:215px;top:180px;width:63px;letter-spacing:0.03px">Coupon Discount</div>
<div class="cell" style="left:279px;top:180px;width:63px;letter-spacing:0.27px">Order Amount</div>
<div class="cell" style="left:343px;top:180px;width:63px;letter-spacing:0.12px">Order Status</div>
<div class="cell" style="left:407px;top:180px;width:63px;letter-spacing:0.02px">Customer ID</div>
<div class="cell" style="left:471px;top:180px;width:63px;letter-spacing:0.25px">Name</div>
<div class="cell" style="left:535px;top:180px;width:63px;letter-spacing:-0.15px">Email</div>
<div class="cell" style="left:599px;top:180px;width:63px;letter-spacing:0.41px">Telephone</div>
<div class="cell" style="left:663px;top:180px;width:63px;letter-spacing:0.09px">Customer Group</div>
<div class="cell" style="left:727px;top:180px;width:63px;letter-spacing:0.15px">Store</div>
<div class="cell" style="left:791px;top:180px;width:200px;letter-spacing:0.09px">Coupon Applied Date</div>
<div class="cell r" style="left:23px;top:200px;width:63px;letter-spacing:-0.51px">5</div>
<div class="cell" style="left:87px;top:200px;width:63px;letter-spacing:-0.68px">4D8J6M8YXX</div>
<div class="cell" style="left:151px;top:200px;width:63px;letter-spacing:-0.68px">4D8J6M8YXX</div>
<div class="cell r" style="left:215px;top:200px;width:63px;padding-right:6px;letter-spacing:-0.38px">$23.80</div>
<div class="cell r" style="left:279px;top:200px;width:63px;padding-right:6px;letter-spacing:-0.40px">$269.03</div>
<div class="cell" style="left:343px;top:200px;width:63px;letter-spacing:0.07px">Pending</div>
<div class="cell r" style="left:407px;top:200px;width:63px;letter-spacing:-0.51px">1</div>
<div class="cell" style="left:471px;top:200px;width:63px;letter-spacing:0.41px">demo demo</div>
<div class="cell" style="left:535px;top:200px;width:63px;letter-spacing:0.22px">demo@gmail.com</div>
<div class="cell r" style="left:599px;top:200px;width:63px;letter-spacing:-0.67px">9.9E+09</div>
<div class="cell" style="left:663px;top:200px;width:63px;letter-spacing:0.32px">Default</div>
<div class="cell" style="left:727px;top:200px;width:63px;letter-spacing:0.07px">Your Store</div>
<div class="cell" style="left:791px;top:200px;width:200px;letter-spacing:0.04px">14/07/2022</div>
<div class="cell r" style="left:23px;top:220px;width:63px;letter-spacing:-0.51px">6</div>
<div class="cell" style="left:87px;top:220px;width:63px;letter-spacing:-0.68px">4D8J6M8YXX</div>
<div class="cell" style="left:151px;top:220px;width:63px;letter-spacing:-0.68px">4D8J6M8YXX</div>
<div class="cell r" style="left:215px;top:220px;width:63px;padding-right:6px;letter-spacing:-0.38px">$30.20</div>
<div class="cell r" style="left:279px;top:220px;width:63px;padding-right:6px;letter-spacing:-0.40px">$276.80</div>
<div class="cell" style="left:343px;top:220px;width:63px;letter-spacing:0.07px">Pending</div>
<div class="cell r" style="left:407px;top:220px;width:63px;letter-spacing:-0.51px">2</div>
<div class="cell" style="left:471px;top:220px;width:63px;letter-spacing:0.45px">student student</div>
<div class="cell" style="left:535px;top:220px;width:63px;letter-spacing:0.26px">student@gmail.com</div>
<div class="cell r" style="left:599px;top:220px;width:63px;letter-spacing:-0.65px">5.62E+09</div>
<div class="cell" style="left:663px;top:220px;width:63px;letter-spacing:0.35px">Student</div>
<div class="cell" style="left:727px;top:220px;width:63px;letter-spacing:0.07px">Your Store</div>
<div class="cell" style="left:791px;top:220px;width:200px;letter-spacing:0.04px">14/07/2022</div>
<div class="cell r" style="left:23px;top:240px;width:63px;letter-spacing:-0.51px">7</div>
<div class="cell" style="left:87px;top:240px;width:63px;letter-spacing:-0.33px">8O9H3M6IXX</div>
<div class="cell" style="left:151px;top:240px;width:63px;letter-spacing:-0.33px">8O9H3M6IXX</div>
<div class="cell r" style="left:215px;top:240px;width:63px;padding-right:6px;letter-spacing:-0.40px">$139.95</div>
<div class="cell r" style="left:279px;top:240px;width:63px;padding-right:6px;letter-spacing:-0.40px">$798.04</div>
<div class="cell" style="left:343px;top:240px;width:63px;letter-spacing:0.07px">Pending</div>
<div class="cell r" style="left:407px;top:240px;width:63px;letter-spacing:-0.51px">3</div>
<div class="cell" style="left:471px;top:240px;width:63px;letter-spacing:0.17px">wholesale wholesale</div>
<div class="cell" style="left:535px;top:240px;width:63px;letter-spacing:0.14px">wholesale@gmail.com</div>
<div class="cell r" style="left:599px;top:240px;width:63px;letter-spacing:-0.65px">9.87E+09</div>
<div class="cell" style="left:663px;top:240px;width:63px;letter-spacing:0.22px">Wholesale</div>
<div class="cell" style="left:727px;top:240px;width:63px;letter-spacing:0.07px">Your Store</div>
<div class="cell" style="left:791px;top:240px;width:200px;letter-spacing:0.04px">14/07/2022</div>
<div class="cell r" style="left:23px;top:260px;width:63px;letter-spacing:-0.51px">8</div>
<div class="cell" style="left:87px;top:260px;width:63px;letter-spacing:-0.84px">15POFF</div>
<div class="cell" style="left:151px;top:260px;width:63px;letter-spacing:-0.84px">15POFF</div>
<div class="cell r" style="left:215px;top:260px;width:63px;padding-right:6px;letter-spacing:-0.38px">$15.15</div>
<div class="cell r" style="left:279px;top:260px;width:63px;padding-right:6px;letter-spacing:-0.38px">$90.85</div>
<div class="cell" style="left:343px;top:260px;width:63px;letter-spacing:0.07px">Pending</div>
<div class="cell r" style="left:407px;top:260px;width:63px;letter-spacing:-0.51px">3</div>
<div class="cell" style="left:471px;top:260px;width:63px;letter-spacing:0.17px">wholesale wholesale</div>
<div class="cell" style="left:535px;top:260px;width:63px;letter-spacing:0.14px">wholesale@gmail.com</div>
<div class="cell r" style="left:599px;top:260px;width:63px;letter-spacing:-0.65px">9.87E+09</div>
<div class="cell" style="left:663px;top:260px;width:63px;letter-spacing:0.22px">Wholesale</div>
<div class="cell" style="left:727px;top:260px;width:63px;letter-spacing:0.07px">Your Store</div>
<div class="cell" style="left:791px;top:260px;width:200px;letter-spacing:0.04px">14/07/2022</div>
<div class="cell r" style="left:23px;top:280px;width:63px;letter-spacing:-0.51px">9</div>
<div class="cell" style="left:87px;top:280px;width:63px;letter-spacing:-0.12px">Season sale</div>
<div class="cell" style="left:151px;top:280px;width:63px;letter-spacing:-1.00px">ABGTDPK2XX</div>
<div class="cell" style="left:215px;top:280px;width:63px;letter-spacing:-0.44px">15.85¬</div>
<div class="cell" style="left:279px;top:280px;width:63px;letter-spacing:-0.44px">67.32¬</div>
<div class="cell" style="left:343px;top:280px;width:63px;letter-spacing:0.07px">Pending</div>
<div class="cell r" style="left:407px;top:280px;width:63px;letter-spacing:-0.51px">3</div>
<div class="cell" style="left:471px;top:280px;width:63px;letter-spacing:0.17px">wholesale wholesale</div>
<div class="cell" style="left:535px;top:280px;width:63px;letter-spacing:0.14px">wholesale@gmail.com</div>
<div class="cell r" style="left:599px;top:280px;width:63px;letter-spacing:-0.65px">9.87E+09</div>
<div class="cell" style="left:663px;top:280px;width:63px;letter-spacing:0.22px">Wholesale</div>
<div class="cell" style="left:727px;top:280px;width:63px;letter-spacing:0.07px">Your Store</div>
<div class="cell" style="left:791px;top:280px;width:200px;letter-spacing:0.04px">14/07/2022</div>
<div class="a" style="left:23px;top:180px;width:1px;height:21px;background:#000"></div>
<div class="a" style="left:23px;top:180px;width:65px;height:1px;background:#000"></div>
<div class="a" style="left:85px;top:180px;width:3px;height:16px;background:#000"></div>
<div class="a" style="left:23px;top:198px;width:60px;height:3px;background:#000"></div>
<div class="a" style="left:83px;top:196px;width:7px;height:7px;background:#fff"></div>
<div class="a" style="left:84px;top:197px;width:5px;height:5px;background:#000"></div>
<svg class="a" style="left:0;top:0" width="1012" height="569"><line x1="339" y1="372" x2="311" y2="340" stroke="#FF0000" stroke-width="2.6"/><polygon points="305,334 317,339 308,346" fill="#FF0000"/></svg>
<div class="a" style="left:301px;top:373.5px;font-size:18.05px;font-weight:bold;color:#FF0000;white-space:nowrap;line-height:20px">coupon tracking data exported into excel</div></body></html>
